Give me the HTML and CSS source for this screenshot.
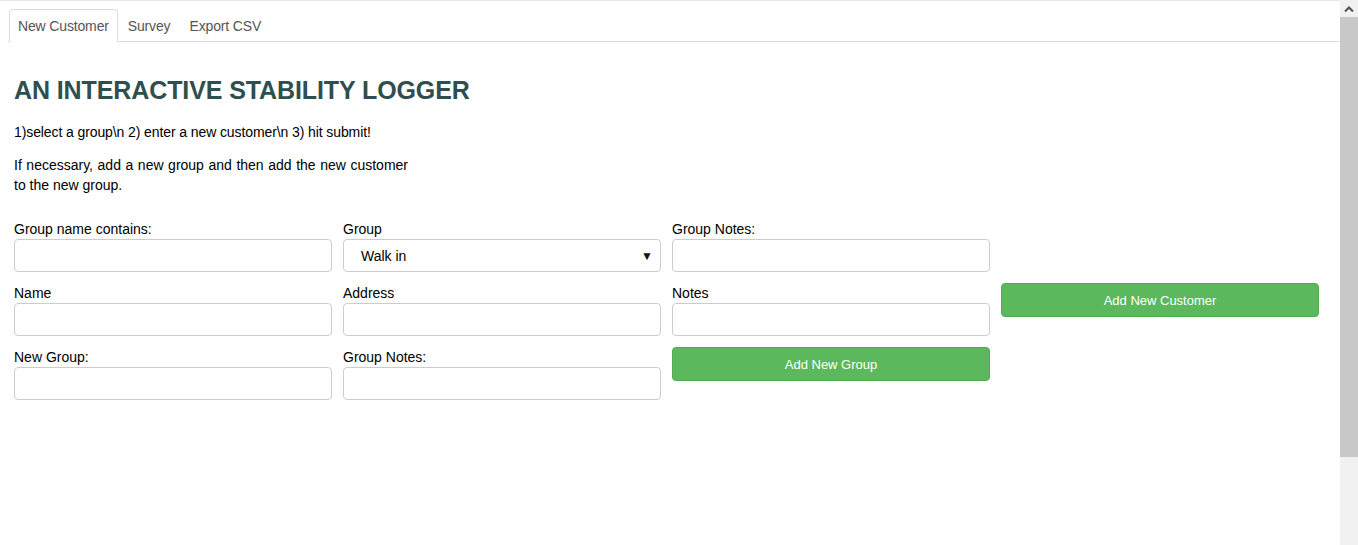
FILE: index.html
```html
<!DOCTYPE html>
<html>
<head>
<meta charset="utf-8">
<link rel="stylesheet" href="styles.css">
</head>
<body>
<div class="page">
  <div class="main">
    <ul class="tabs">
      <li class="tab active">New Customer</li>
      <li class="tab">Survey</li>
      <li class="tab">Export CSV</li>
    </ul>
    <div class="content">
      <h1 class="title">AN INTERACTIVE STABILITY LOGGER</h1>
      <p class="intro">1)select a group\n 2) enter a new customer\n 3) hit submit!</p>
      <p class="note">If necessary, add a new group and then add the new customer to the new group.</p>
      <div class="form">
        <div class="field"><label>Group name contains:</label><input class="input" type="text"></div>
        <div class="field"><label>Group</label><div class="input select"><span>Walk in</span><span class="arrow">▼</span></div></div>
        <div class="field"><label>Group Notes:</label><input class="input" type="text"></div>
        <div class="field"></div>
        <div class="field"><label>Name</label><input class="input" type="text"></div>
        <div class="field"><label>Address</label><input class="input" type="text"></div>
        <div class="field"><label>Notes</label><input class="input" type="text"></div>
        <div class="field"><button class="btn">Add New Customer</button></div>
        <div class="field"><label>New Group:</label><input class="input" type="text"></div>
        <div class="field"><label>Group Notes:</label><input class="input" type="text"></div>
        <div class="field"><button class="btn">Add New Group</button></div>
        <div class="field"></div>
      </div>
    </div>
  </div>
  <div class="scrollbar">
    <div class="sb-btn"><svg width="10" height="6" viewBox="0 0 10 6"><path d="M1 5.5 L5 1.5 L9 5.5" fill="none" stroke="#505050" stroke-width="2"/></svg></div>
    <div class="sb-thumb"></div>
    <div class="sb-track"></div>
  </div>
</div>
</body>
</html>
```
FILE: styles.css
```css
html, body {
  margin: 0;
  padding: 0;
  height: 545px;
  overflow: hidden;
  background: #fff;
}
body {
  font-family: "Liberation Sans", Arial, sans-serif;
  font-size: 14px;
  color: #000;
}
.page {
  display: flex;
  height: 545px;
}
.main {
  flex: 1;
  border-top: 1px solid #e6e6e6;
}
.tabs {
  list-style: none;
  margin: 8px 0 0 8px;
  padding: 0 0 0 1px;
  display: flex;
  border-bottom: 1px solid #dddddd;
}
.tab {
  height: 31px;
  line-height: 33px;
  padding: 0 8px;
  margin-right: 1px;
  color: #555;
  font-size: 14px;
  letter-spacing: -0.15px;
  border: 1px solid transparent;
  border-bottom: none;
  border-radius: 4px 4px 0 0;
  margin-bottom: -1px;
}
.tab.active {
  border-color: #dddddd;
  background: #fff;
  height: 32px;
}
.content {
  padding: 0 0 0 14px;
}
.title {
  margin: 30px 0 0 0;
  font-size: 25px;
  font-weight: bold;
  color: #2f4f4f;
  line-height: 36px;
  letter-spacing: -0.1px;
}
.intro {
  margin: 14px 0 0 0;
  line-height: 20px;
  letter-spacing: -0.1px;
}
.note {
  margin: 13px 0 0 0;
  width: 394px;
  line-height: 20px;
  text-align: justify;
}
.form {
  margin-top: 24px;
  display: grid;
  grid-template-columns: repeat(4, 318px);
  column-gap: 11px;
  row-gap: 11px;
}
.field {
  display: flex;
  flex-direction: column;
}
.field label {
  line-height: 20px;
  height: 20px;
}
.input {
  box-sizing: border-box;
  height: 33px;
  width: 318px;
  border: 1px solid #cccccc;
  border-radius: 4px;
  background: #fff;
  font-family: inherit;
  font-size: 14px;
  margin: 0;
  padding: 0 12px;
}
.select {
  display: flex;
  align-items: center;
  justify-content: space-between;
  padding: 0 7px 0 17px;
  color: #000;
}
.arrow {
  font-size: 12px;
  color: #111;
}
.btn {
  box-sizing: border-box;
  height: 34px;
  width: 318px;
  background: #5cb85c;
  border: 1px solid #4cae4c;
  border-radius: 4px;
  color: #fff;
  font-family: inherit;
  font-size: 13px;
  margin: 0;
  padding: 0;
}
.scrollbar {
  width: 18px;
  display: flex;
  flex-direction: column;
  background: #f1f1f1;
}
.sb-btn {
  height: 17px;
  display: flex;
  align-items: center;
  justify-content: center;
}
.sb-thumb {
  height: 440px;
  background: #c8c8c8;
  margin: 0 0 1px 0;
}
.sb-track {
  flex: 1;
}
```
